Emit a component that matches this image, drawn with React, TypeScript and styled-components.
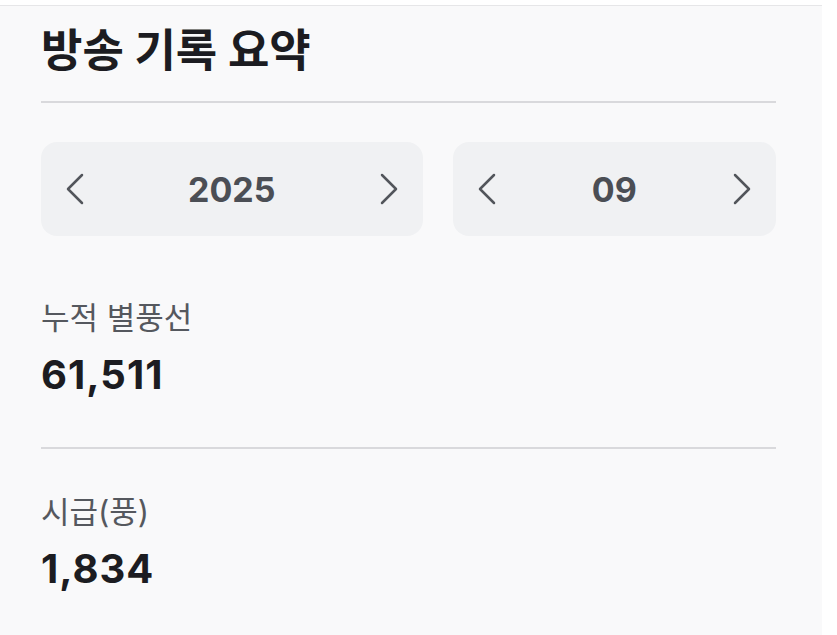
import React from "react";
import styled, { createGlobalStyle } from "styled-components";

const GlobalStyle = createGlobalStyle`
  body {
    margin: 0;
    background: #ffffff;
    font-family: Inter, "Noto Sans CJK KR", sans-serif;
  }
`;

const Page = styled.div`
  padding-top: 5px;
  width: 837px;
  height: 630px;
  overflow: hidden;
`;

const Card = styled.section`
  width: 822px;
  height: 100%;
  box-sizing: border-box;
  padding: 20px 46px 0 41px;
  background: #f9f9fa;
  border-top: 1px solid #e6e6e8;
`;

const Title = styled.h1`
  margin: 0;
  font-size: 45px;
  line-height: 50px;
  font-weight: 700;
  color: #1c1c21;
`;

const Divider = styled.hr<{ $top: number }>`
  margin: ${(p) => p.$top}px 0 0;
  border: 0;
  height: 2px;
  background: #d9d9dc;
`;

const Pickers = styled.div`
  display: grid;
  grid-template-columns: 381fr 323fr;
  gap: 30px;
  margin-top: 39px;
`;

const Picker = styled.div`
  height: 94px;
  display: flex;
  align-items: center;
  justify-content: space-between;
  padding: 0 22px;
  border-radius: 16px;
  background: #f0f1f3;
`;

const Arrow = styled.button`
  display: flex;
  align-items: center;
  justify-content: center;
  width: 24px;
  height: 40px;
  padding: 0;
  border: 0;
  background: none;
  color: #52555b;
  cursor: pointer;
`;

const PickerValue = styled.span`
  font-size: 34px;
  font-weight: 700;
  color: #4b4e55;
`;

const Stat = styled.div<{ $top: number }>`
  margin-top: ${(p) => p.$top}px;
`;

const StatLabel = styled.div`
  font-size: 31px;
  line-height: 36px;
  color: #55585e;
`;

const StatValue = styled.div`
  margin-top: 17px;
  font-size: 40px;
  line-height: 44px;
  font-weight: 700;
  letter-spacing: 1px;
  color: #1c1c21;
`;

const Chevron = ({ dir }: { dir: "left" | "right" }) => (
  <svg width="20" height="32" viewBox="0 0 20 32" fill="none">
    <path
      d={dir === "left" ? "M17 2 L3 16 L17 30" : "M3 2 L17 16 L3 30"}
      stroke="currentColor"
      strokeWidth="2.5"
      strokeLinecap="round"
      strokeLinejoin="round"
    />
  </svg>
);

const DatePicker = ({ value }: { value: string }) => (
  <Picker>
    <Arrow aria-label="이전">
      <Chevron dir="left" />
    </Arrow>
    <PickerValue>{value}</PickerValue>
    <Arrow aria-label="다음">
      <Chevron dir="right" />
    </Arrow>
  </Picker>
);

export default function App() {
  return (
    <>
      <GlobalStyle />
      <Page>
        <Card>
          <Title>방송 기록 요약</Title>
          <Divider $top={25} />
          <Pickers>
            <DatePicker value="2025" />
            <DatePicker value="09" />
          </Pickers>
          <Stat $top={64}>
            <StatLabel>누적 별풍선</StatLabel>
            <StatValue>61,511</StatValue>
          </Stat>
          <Divider $top={50} />
          <Stat $top={45}>
            <StatLabel>시급(풍)</StatLabel>
            <StatValue>1,834</StatValue>
          </Stat>
        </Card>
      </Page>
    </>
  );
}
